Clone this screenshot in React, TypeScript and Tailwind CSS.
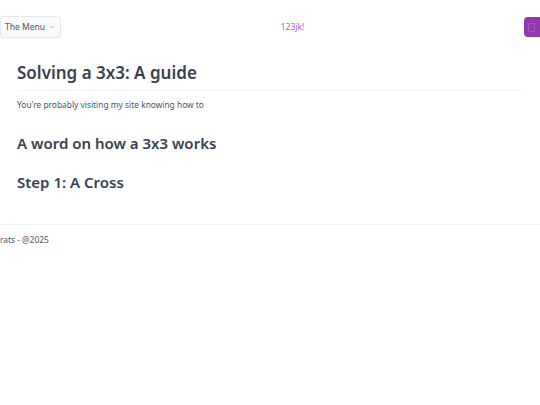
import { ChevronDown } from 'lucide-react';

const font = { fontFamily: '"Noto Sans", "Open Sans", sans-serif' };

const App = () => {
  return (
    <div className="min-h-screen w-full bg-white text-[#374151]" style={font}>
      <header className="flex h-[54px] items-center justify-between">
        <button className="flex h-[22px] items-center gap-[3px] rounded-[3px] border border-gray-200 bg-gray-50 pl-1 pr-[4px] text-[8.5px] text-gray-600">
          The Menu
          <ChevronDown className="h-2 w-2 text-gray-400" />
        </button>
        <span className="text-[8.5px] text-[#b05cd0]">123jk!</span>
        <button className="flex h-[20px] w-[16px] items-center justify-center rounded-l-[4px] bg-[#9239b0]">
          <span className="h-[9px] w-[7px] rounded-[1px] border border-[#a454c2]" />
        </button>
      </header>
      <main className="px-[17px] pt-[7px]">
        <h1 className="border-b border-gray-100 pb-[5px] text-[17px] font-semibold leading-[24px]">
          Solving a 3x3: A guide
        </h1>
        <p className="mt-[7px] text-[8.4px] leading-[14px] text-gray-600">
          You're probably visiting my site knowing how to
        </p>
        <h2 className="mt-[20px] text-[15px] font-semibold leading-[22px]">A word on how a 3x3 works</h2>
        <h2 className="mt-[17px] text-[15px] font-semibold leading-[22px]">Step 1: A Cross</h2>
      </main>
      <footer className="mt-[31px] border-t border-gray-100 pt-[8px] text-[8.4px] leading-[14px] text-gray-600">
        rats - @2025
      </footer>
    </div>
  );
};

export default App;
